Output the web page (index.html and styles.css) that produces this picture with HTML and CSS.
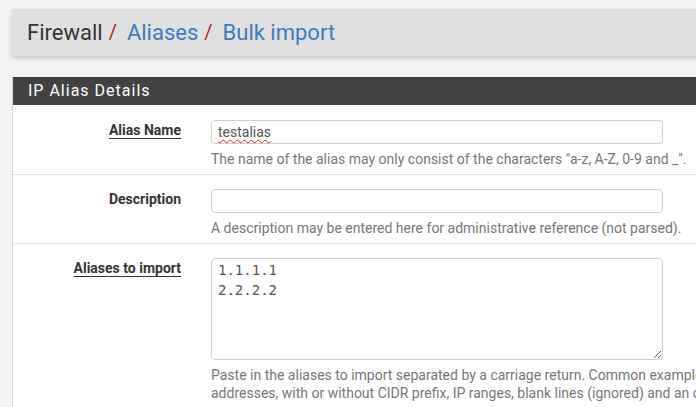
FILE: index.html
```html
<!DOCTYPE html>
<html>
<head>
<meta charset="utf-8">
<link rel="stylesheet" href="styles.css">
</head>
<body>
<div class="page">
  <div class="bar">
    <h1 class="crumbs">
      <span class="crumb">Firewall</span>
      <span class="sep">/</span>
      <a class="crumb link" href="#">Aliases</a>
      <span class="sep">/</span>
      <a class="crumb link" href="#">Bulk import</a>
    </h1>
  </div>

  <div class="panel">
    <div class="panel-heading">IP Alias Details</div>
    <div class="panel-body">
      <div class="row">
        <div class="label"><span class="req">Alias Name</span></div>
        <div class="field">
          <div class="form-control"><span class="spell">testalias</span></div>
          <div class="help">The name of the alias may only consist of the characters "a-z, A-Z, 0-9 and _".</div>
        </div>
      </div>
      <div class="row">
        <div class="label"><span>Description</span></div>
        <div class="field">
          <div class="form-control"></div>
          <div class="help">A description may be entered here for administrative reference (not parsed).</div>
        </div>
      </div>
      <div class="row">
        <div class="label"><span class="req">Aliases to import</span></div>
        <div class="field">
          <textarea class="textarea" spellcheck="false">1.1.1.1
2.2.2.2</textarea>
          <div class="help nowrap">Paste in the aliases to import separated by a carriage return. Common examples are lists of IPs,<br>addresses, with or without CIDR prefix, IP ranges, blank lines (ignored) and an optional description</div>
        </div>
      </div>
    </div>
  </div>
</div>
</body>
</html>
```

FILE: styles.css
```css
html, body {
  margin: 0;
  padding: 0;
  background: #f3f3f3;
  overflow: hidden;
}
body {
  font-family: Roboto, "Liberation Sans", sans-serif;
  font-size: 14px;
  color: #333;
}
.page {
  width: 1000px;
  padding: 9px 0 0 12px;
}
.bar {
  background: #e0e0e0;
  height: 47px;
  box-shadow: 0 2px 4px rgba(0,0,0,0.18);
  display: flex;
  align-items: center;
  padding-left: 15px;
}
.crumbs {
  margin: 0;
  font-size: 22px;
  font-weight: 400;
  line-height: 47px;
  display: flex;
  align-items: center;
  white-space: nowrap;
}
.crumb {
  color: #333;
  text-decoration: none;
}
.link {
  color: #3a7dbf;
}
.sep {
  color: #b71c1c;
  font-size: 20px;
  padding: 0 10px 0 6px;
}
.panel {
  margin-top: 21px;
  background: #fff;
  border-left: 1px solid #d6d6d6;
}
.panel-heading {
  background: #424242;
  color: #fff;
  height: 28px;
  line-height: 28px;
  padding-left: 15px;
  font-size: 16px;
  letter-spacing: 1px;
}
.row {
  display: flex;
  padding: 15px 0 5px 0;
  border-bottom: 1px solid #e2e2e2;
}
.row + .row {
  padding-top: 14px;
}
.label {
  width: 168px;
  padding-right: 15px;
  text-align: right;
  font-weight: 700;
  line-height: 20px;
  padding-top: 0;
}
.req {
  text-decoration: underline;
  text-underline-offset: 3px;
  text-decoration-thickness: 1px;
}
.field {
  padding-left: 15px;
}
.form-control {
  box-sizing: border-box;
  width: 452px;
  height: 24px;
  border: 1px solid #cfcfcf;
  border-radius: 4px;
  padding: 0 6px;
  line-height: 22px;
  font-size: 14px;
  color: #555;
  background: #fff;
}
.spell {
  text-decoration: underline wavy #e0191d;
  text-decoration-thickness: 1px;
  text-underline-offset: 2px;
}
.textarea {
  display: block;
  box-sizing: border-box;
  width: 452px;
  height: 102px;
  border: 1px solid #cfcfcf;
  border-radius: 4px;
  padding: 1px 6px;
  margin: 0;
  font-family: "DejaVu Sans Mono", "Liberation Mono", monospace;
  font-size: 14px;
  line-height: 20px;
  color: #555;
  resize: vertical;
  outline: none;
}
.help {
  color: #777;
  margin-top: 5px;
  line-height: 20px;
}
.nowrap {
  white-space: nowrap;
  line-height: 18px;
  margin-top: 6px;
}
```
